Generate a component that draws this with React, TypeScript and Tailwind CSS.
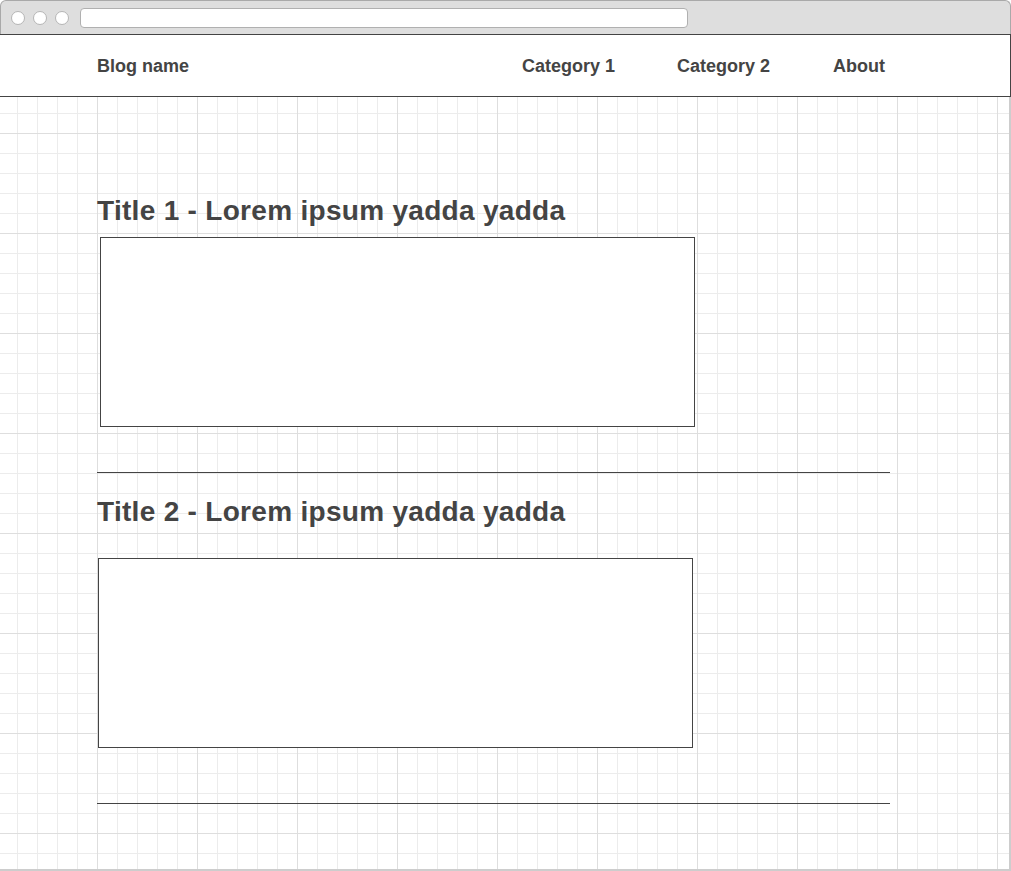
import React from "react";

const font = { fontFamily: '"Liberation Sans", Arial, Helvetica, sans-serif' };

function Circle() {
  return <div className="w-[14px] h-[14px] rounded-full bg-white border border-[#b5b5b5]" />;
}

export default function App() {
  return (
    <div className="w-[1011px] h-[871px] bg-white flex flex-col overflow-hidden" style={font}>
      {/* browser chrome */}
      <div className="h-[34px] shrink-0 bg-[#dedede] border-t border-l border-r border-[#a9a9a9] rounded-t-[6px] flex items-center pl-[10px]">
        <div className="flex items-center gap-[8px]">
          <Circle />
          <Circle />
          <Circle />
        </div>
        <div className="ml-[11px] w-[608px] h-[20px] bg-white border border-[#b0b0b0] rounded-[4px]" />
      </div>

      {/* header */}
      <div className="h-[63px] shrink-0 bg-white border-t border-b border-r border-[#444444] flex items-center pt-[2px] pl-[97px] text-[18px] font-bold text-[#444444]">
        <span className="w-[425px]">Blog name</span>
        <span className="w-[155px]">Category 1</span>
        <span className="w-[156px]">Category 2</span>
        <span>About</span>
      </div>

      {/* content */}
      <div className="flex-1 border-r-2 border-b-2 border-[#cdcdcd] [background-image:linear-gradient(to_right,#dedede_1px,transparent_1px),linear-gradient(to_bottom,#dedede_1px,transparent_1px),linear-gradient(to_right,#ececec_1px,transparent_1px),linear-gradient(to_bottom,#ececec_1px,transparent_1px)] [background-size:100px_100px,100px_100px,20px_20px,20px_20px] [background-position:97px_36px,97px_36px,17px_16px,17px_16px]">
        <div className="pl-[97px] w-[890px] flex flex-col">
          <h1 className="mt-[98px] text-[28px] leading-[32px] font-bold text-[#444444] tracking-[0.3px]">
            Title 1 - Lorem ipsum yadda yadda
          </h1>
          <div className="mt-[10px] ml-[3px] w-[595px] h-[190px] bg-white border border-[#444444]" />
          <div className="mt-[45px] w-[793px] h-px bg-[#444444]" />

          <h1 className="mt-[23px] text-[28px] leading-[32px] font-bold text-[#444444] tracking-[0.3px]">
            Title 2 - Lorem ipsum yadda yadda
          </h1>
          <div className="mt-[30px] ml-[1px] w-[595px] h-[190px] bg-white border border-[#444444]" />
          <div className="mt-[55px] w-[793px] h-px bg-[#444444]" />
        </div>
      </div>
    </div>
  );
}
